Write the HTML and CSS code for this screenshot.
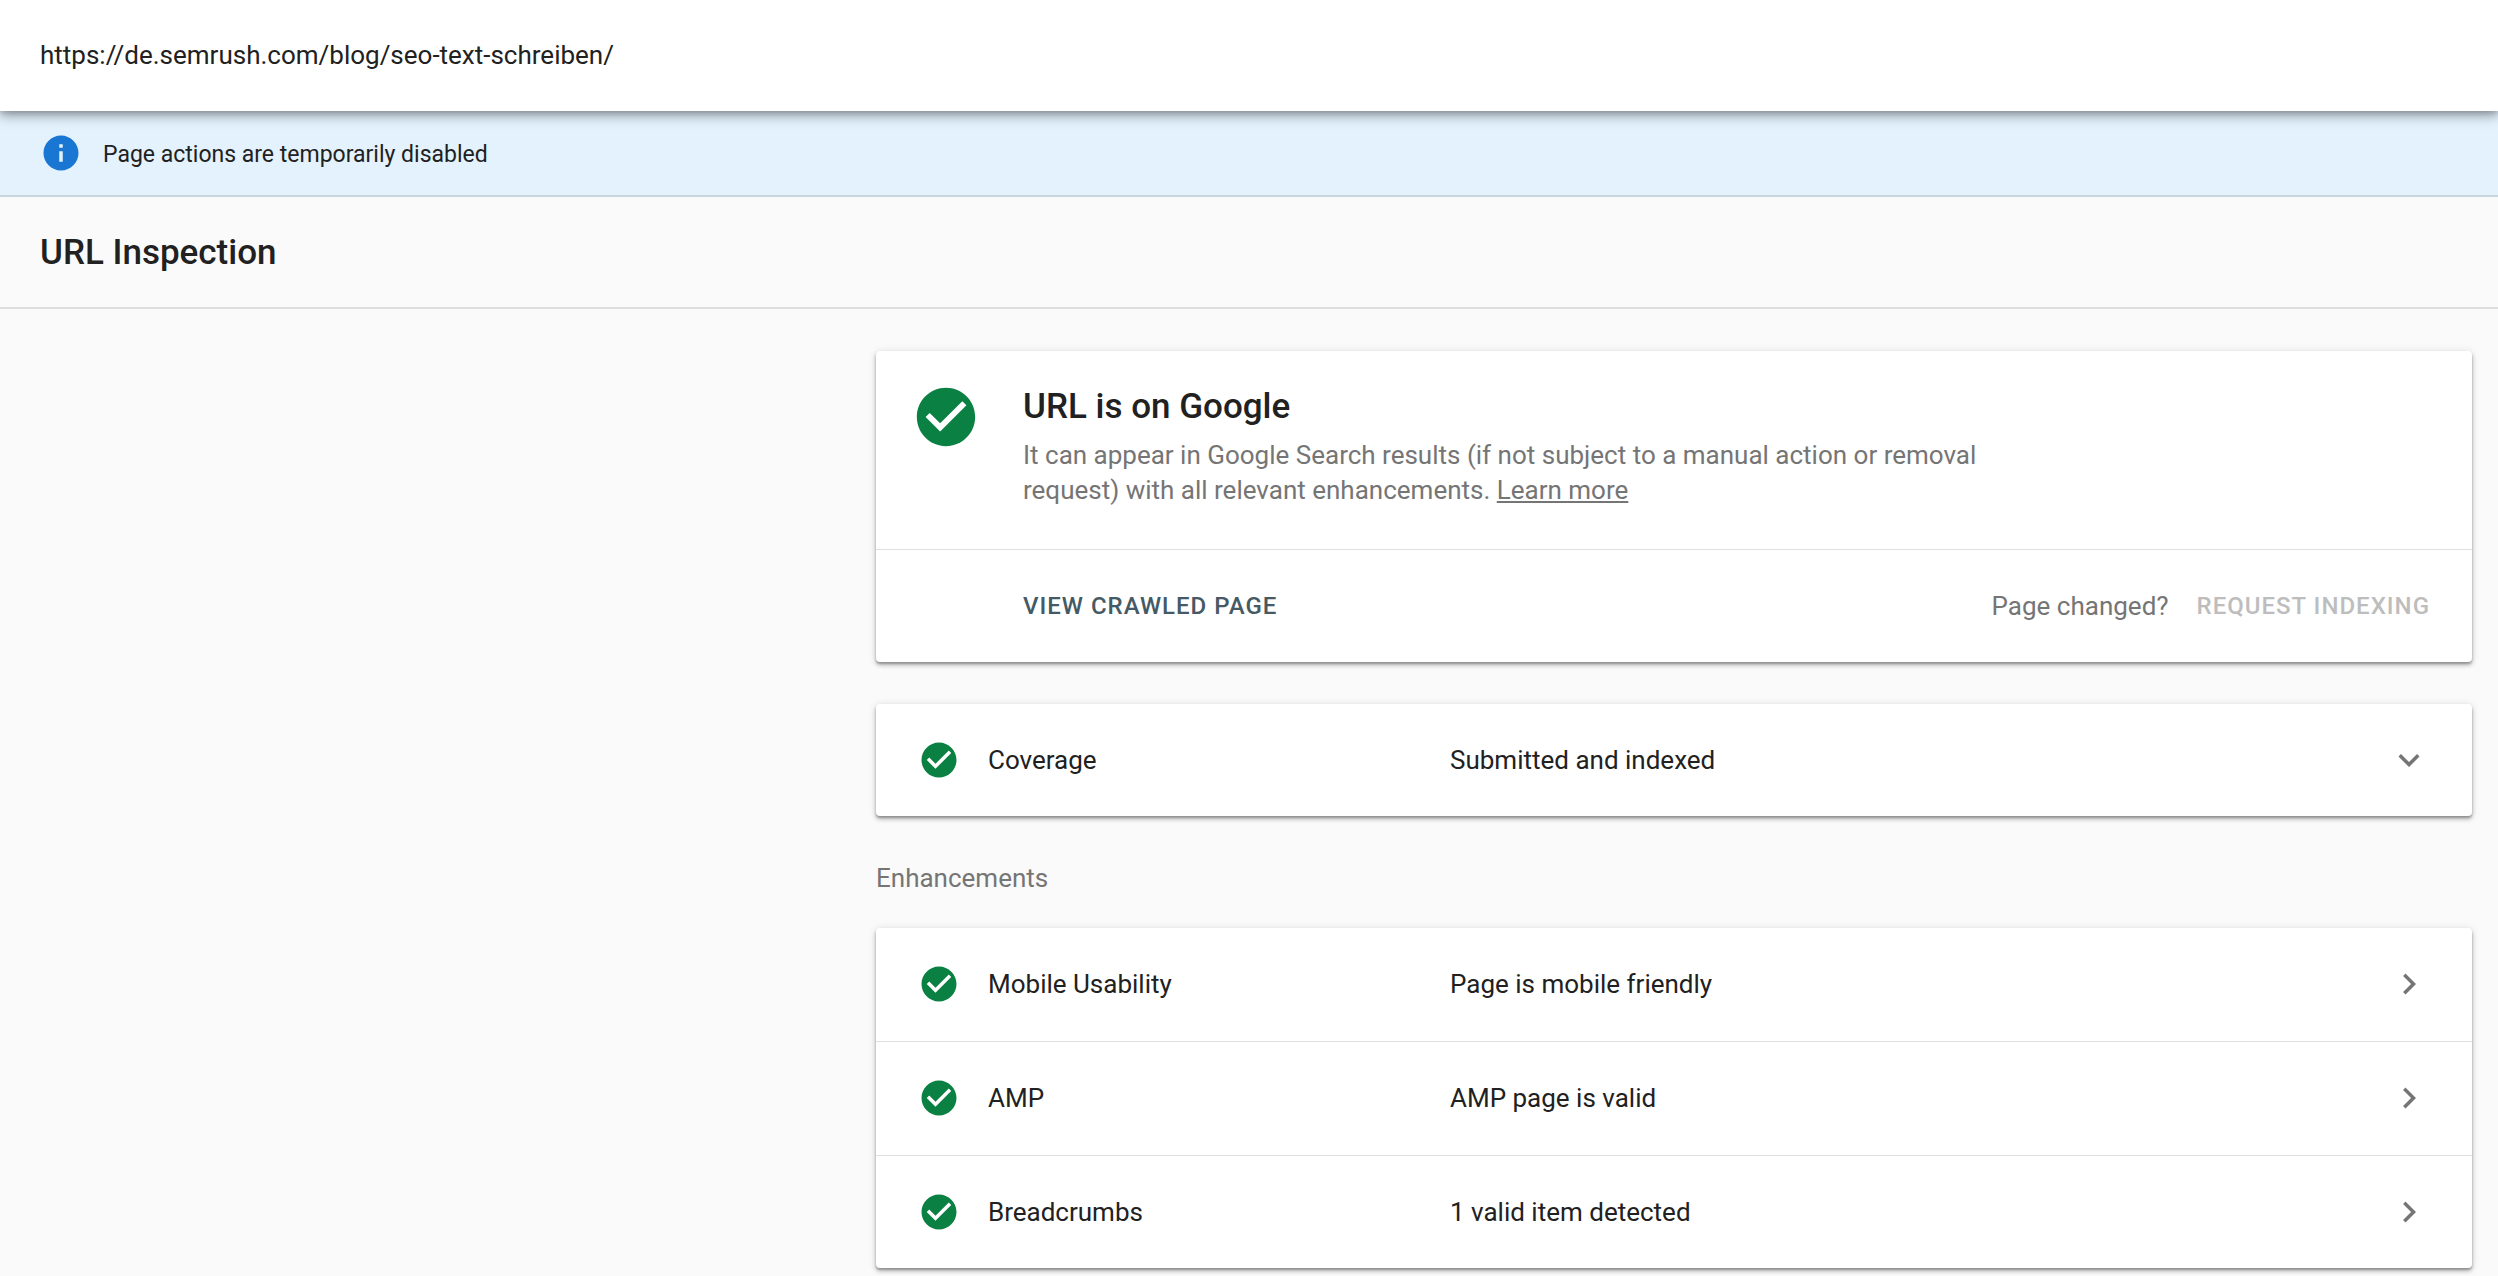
FILE: index.html
```html
<!DOCTYPE html>
<html lang="en">
<head>
<meta charset="utf-8">
<meta name="viewport" content="width=device-width, initial-scale=1">
<title>URL Inspection</title>
<link rel="stylesheet" href="styles.css">
</head>
<body>
<svg class="symbols" aria-hidden="true">
  <symbol id="check" viewBox="0 0 24 24"><path d="M12 2C6.48 2 2 6.48 2 12s4.480 10 10 10 10-4.480 10-10S17.520 2 12 2zm-2 15l-5-5 1.410-1.410L10 14.170l7.590-7.590L19 8l-9 9z"/></symbol>
  <symbol id="info" viewBox="0 0 24 24"><path d="M12 2C6.480 2 2 6.480 2 12s4.480 10 10 10 10-4.480 10-10S17.520 2 12 2zm1 15h-2v-6h2v6zm0-8h-2V7h2v2z"/></symbol>
  <symbol id="chevron-right" viewBox="0 0 24 24"><path d="M10 6L8.590 7.410 13.170 12l-4.580 4.590L10 18l6-6z"/></symbol>
  <symbol id="chevron-down" viewBox="0 0 24 24"><path d="M16.590 8.590L12 13.170 7.410 8.590 6 10l6 6 6-6z"/></symbol>
</svg>

<header class="url-bar">
  <p class="url">https://de.semrush.com/blog/seo-text-schreiben/</p>
</header>

<div class="banner" role="status">
  <svg class="icon icon-info" aria-hidden="true"><use href="#info"/></svg>
  <p class="banner-text">Page actions are temporarily disabled</p>
</div>

<div class="title-bar">
  <h1 class="title">URL Inspection</h1>
</div>

<main class="content">
  <section class="card">
    <div class="verdict">
      <svg class="icon icon-large icon-ok" aria-hidden="true"><use href="#check"/></svg>
      <div class="verdict-text">
        <h2 class="title">URL is on Google</h2>
        <p class="description">It can appear in Google Search results (if not subject to a manual action or removal request) with all relevant enhancements. <a class="learn-more" href="#">Learn more</a></p>
      </div>
    </div>
    <div class="actions">
      <button class="action" type="button">VIEW CRAWLED PAGE</button>
      <span class="hint">Page changed?</span>
      <button class="action" type="button" disabled>REQUEST INDEXING</button>
    </div>
  </section>

  <section class="card">
    <button class="row" type="button" aria-expanded="false">
      <svg class="icon icon-ok" aria-hidden="true"><use href="#check"/></svg>
      <span class="row-name">Coverage</span>
      <span class="row-value">Submitted and indexed</span>
      <svg class="icon icon-chevron" aria-hidden="true"><use href="#chevron-down"/></svg>
    </button>
  </section>

  <section class="group">
    <h2 class="section-label">Enhancements</h2>
    <ul class="card list">
      <li class="list-item">
        <a class="row" href="#">
          <svg class="icon icon-ok" aria-hidden="true"><use href="#check"/></svg>
          <span class="row-name">Mobile Usability</span>
          <span class="row-value">Page is mobile friendly</span>
          <svg class="icon icon-chevron" aria-hidden="true"><use href="#chevron-right"/></svg>
        </a>
      </li>
      <li class="list-item">
        <a class="row" href="#">
          <svg class="icon icon-ok" aria-hidden="true"><use href="#check"/></svg>
          <span class="row-name">AMP</span>
          <span class="row-value">AMP page is valid</span>
          <svg class="icon icon-chevron" aria-hidden="true"><use href="#chevron-right"/></svg>
        </a>
      </li>
      <li class="list-item">
        <a class="row" href="#">
          <svg class="icon icon-ok" aria-hidden="true"><use href="#check"/></svg>
          <span class="row-name">Breadcrumbs</span>
          <span class="row-value">1 valid item detected</span>
          <svg class="icon icon-chevron" aria-hidden="true"><use href="#chevron-right"/></svg>
        </a>
      </li>
    </ul>
  </section>
</main>
</body>
</html>
```

FILE: styles.css
```css
* {
  box-sizing: border-box;
}

body {
  margin: 0;
  background: #fafafa;
  color: #212121;
  font-family: Roboto, "Liberation Sans", sans-serif;
  font-size: 26px;
  line-height: 35px;
}

h1,
h2,
p,
ul {
  margin: 0;
  padding: 0;
}

.symbols {
  display: none;
}

.icon {
  flex: none;
  width: 42px;
  height: 42px;
  fill: currentColor;
}

.icon-large {
  width: 70px;
  height: 70px;
}

.icon-ok {
  color: #0b8043;
}

.icon-info {
  color: #1976d2;
}

.icon-chevron {
  color: #757575;
}

.url-bar {
  position: relative;
  display: flex;
  align-items: center;
  min-height: 111px;
  padding: 0 40px;
  background: #fff;
  box-shadow: 0 4px 12px rgba(0, 0, 0, 0.4), 0 2px 5px rgba(0, 0, 0, 0.12);
}

.banner {
  display: flex;
  align-items: center;
  gap: 21px;
  min-height: 86px;
  padding: 0 40px;
  background: #e3f2fd;
  border-bottom: 2px solid #c8d6e0;
}

.banner-text {
  padding-top: 2px;
  font-size: 23px;
}

.title-bar {
  display: flex;
  align-items: center;
  min-height: 112px;
  padding: 2px 40px 0;
  border-bottom: 2px solid #dddddd;
}

.title {
  font-size: 35px;
  font-weight: 500;
  line-height: 42px;
}

.content {
  display: flex;
  flex-direction: column;
  gap: 42px;
  max-width: 1648px;
  margin-left: auto;
  padding: 42px 26px 8px;
}

.card {
  background: #fff;
  border-radius: 4px;
  box-shadow: 0 3px 4px rgba(0, 0, 0, 0.24), 0 1px 9px rgba(0, 0, 0, 0.12),
    0 2px 2px rgba(0, 0, 0, 0.2);
}

.verdict {
  display: flex;
  gap: 42px;
  padding: 31px 35px 41px;
}

.verdict-text {
  padding-top: 4px;
}

.description {
  max-width: 980px;
  padding-top: 10px;
  color: #757575;
}

.learn-more {
  color: inherit;
}

.actions {
  display: flex;
  align-items: center;
  gap: 28px;
  min-height: 113px;
  padding: 0 42px 0 147px;
  border-top: 1px solid #e0e0e0;
}

.action {
  padding: 0;
  border: 0;
  background: none;
  color: #455a64;
  font: inherit;
  font-size: 24px;
  font-weight: 500;
  letter-spacing: 1px;
}

.action:disabled {
  color: #bdbdbd;
}

.hint {
  margin-left: auto;
  color: #757575;
}

.row {
  display: grid;
  grid-template-columns: 42px 434px 1fr 42px;
  align-items: center;
  gap: 28px;
  width: 100%;
  min-height: 112px;
  padding: 0 42px;
  border: 0;
  background: none;
  color: inherit;
  font: inherit;
  text-align: left;
  text-decoration: none;
}

.section-label {
  padding: 3px 0 32px;
  color: #757575;
  font-size: 26px;
  font-weight: 400;
}

.list {
  display: flex;
  flex-direction: column;
  gap: 1px;
  list-style: none;
}

.list-item + .list-item {
  border-top: 1px solid #e0e0e0;
}
```
